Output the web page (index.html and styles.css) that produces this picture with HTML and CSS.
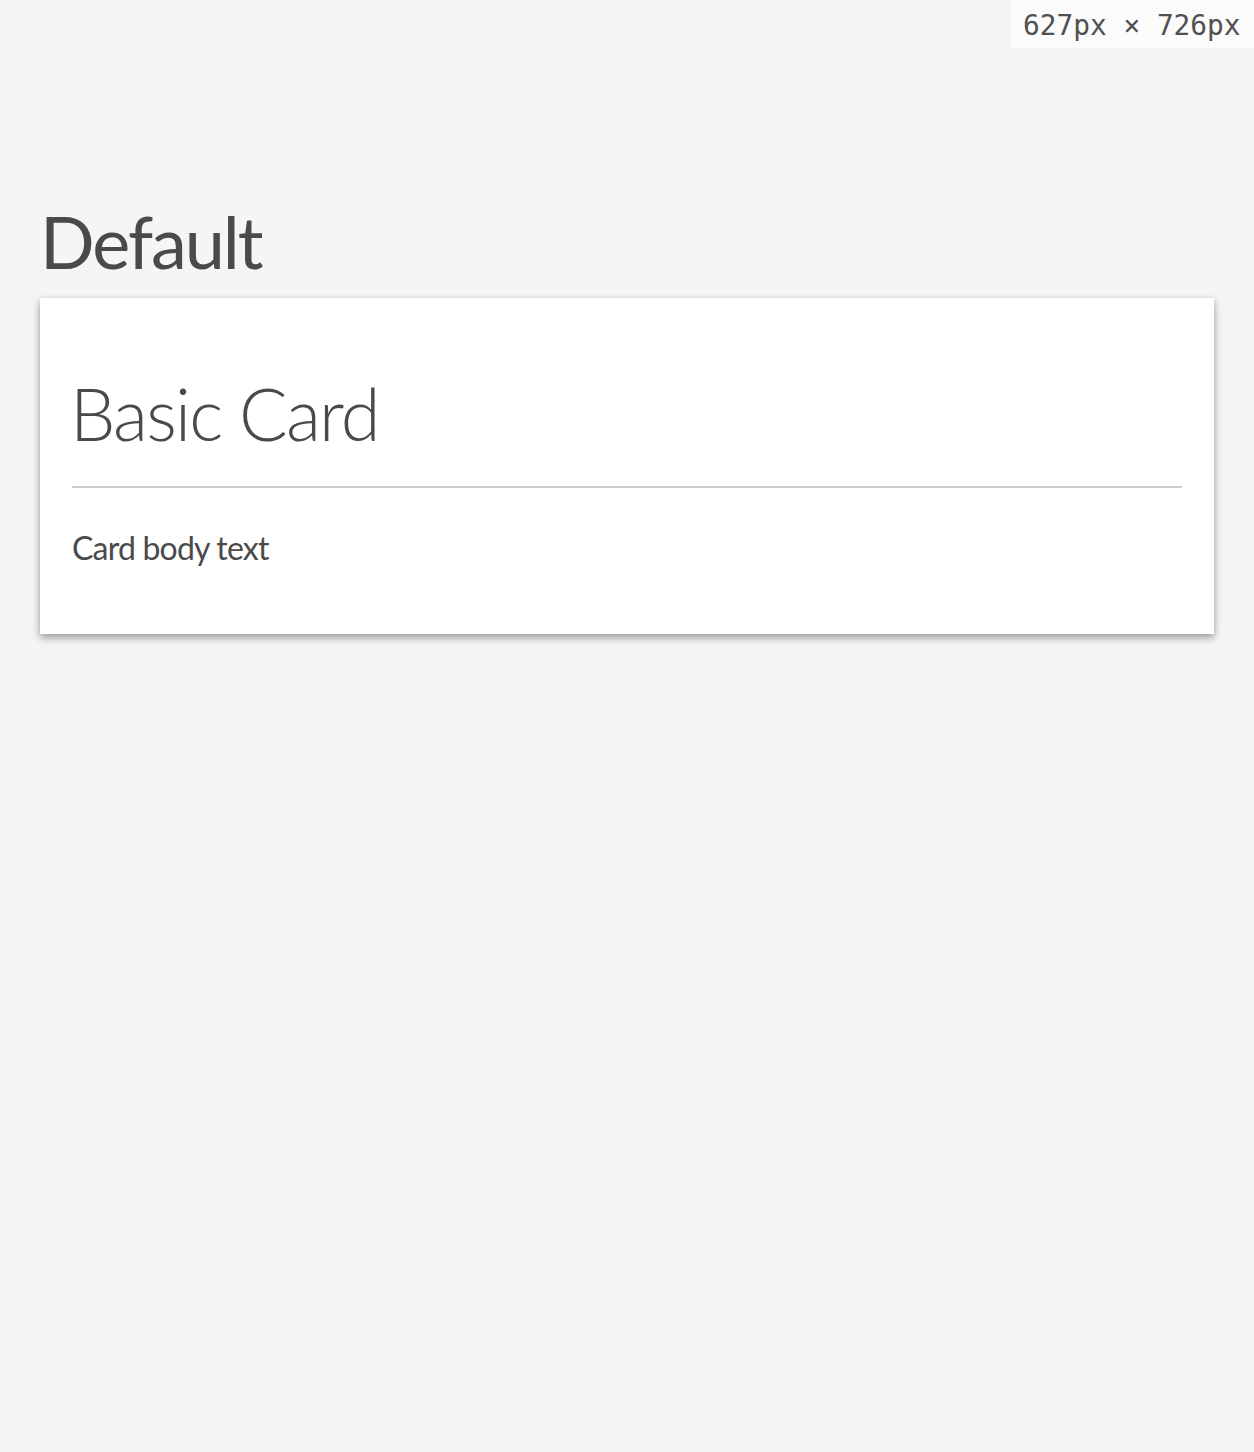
FILE: index.html
```html
<!DOCTYPE html>
<html>
<head>
<meta charset="utf-8">
<link rel="stylesheet" href="styles.css">
</head>
<body>
<div class="size-badge">627px × 726px</div>
<main class="page">
  <h2 class="section-title">Default</h2>
  <section class="card">
    <h3 class="card-title">Basic Card</h3>
    <hr class="card-divider">
    <p class="card-body">Card body text</p>
  </section>
</main>
</body>
</html>
```
FILE: styles.css
```css
html, body {
  margin: 0;
  padding: 0;
  background: #f5f5f5;
  color: #4a4a4a;
  font-family: "Lato", "Liberation Sans", sans-serif;
}
.size-badge {
  position: absolute;
  top: 0;
  right: 0;
  width: 243px;
  height: 48px;
  box-sizing: border-box;
  background: #fbfbfb;
  font-family: "DejaVu Sans Mono", monospace;
  font-size: 27.8px;
  line-height: 52px;
  padding-left: 12px;
  color: #505050;
}
.page {
  padding: 200px 40px 80px 40px;
  display: flex;
  flex-direction: column;
}
.section-title {
  margin: 0 0 16px 0;
  font-size: 72px;
  letter-spacing: -2px;
  font-weight: 400;
  line-height: 82px;
}
.card {
  background: #fff;
  box-shadow: 0 4px 8px rgba(0,0,0,0.35), 0 0 4px rgba(0,0,0,0.08);
  padding: 74px 32px 66px 32px;
  display: flex;
  flex-direction: column;
}
.card-title {
  margin: 0 0 0 -2px;
  font-size: 72px;
  letter-spacing: -1.8px;
  font-weight: 300;
  line-height: 82px;
}
.card-divider {
  border: 0;
  height: 2px;
  background: #cccccc;
  margin: 32px 0 40px 0;
}
.card-body {
  margin: 0;
  font-size: 32px;
  letter-spacing: -0.8px;
  line-height: 40px;
}
```
